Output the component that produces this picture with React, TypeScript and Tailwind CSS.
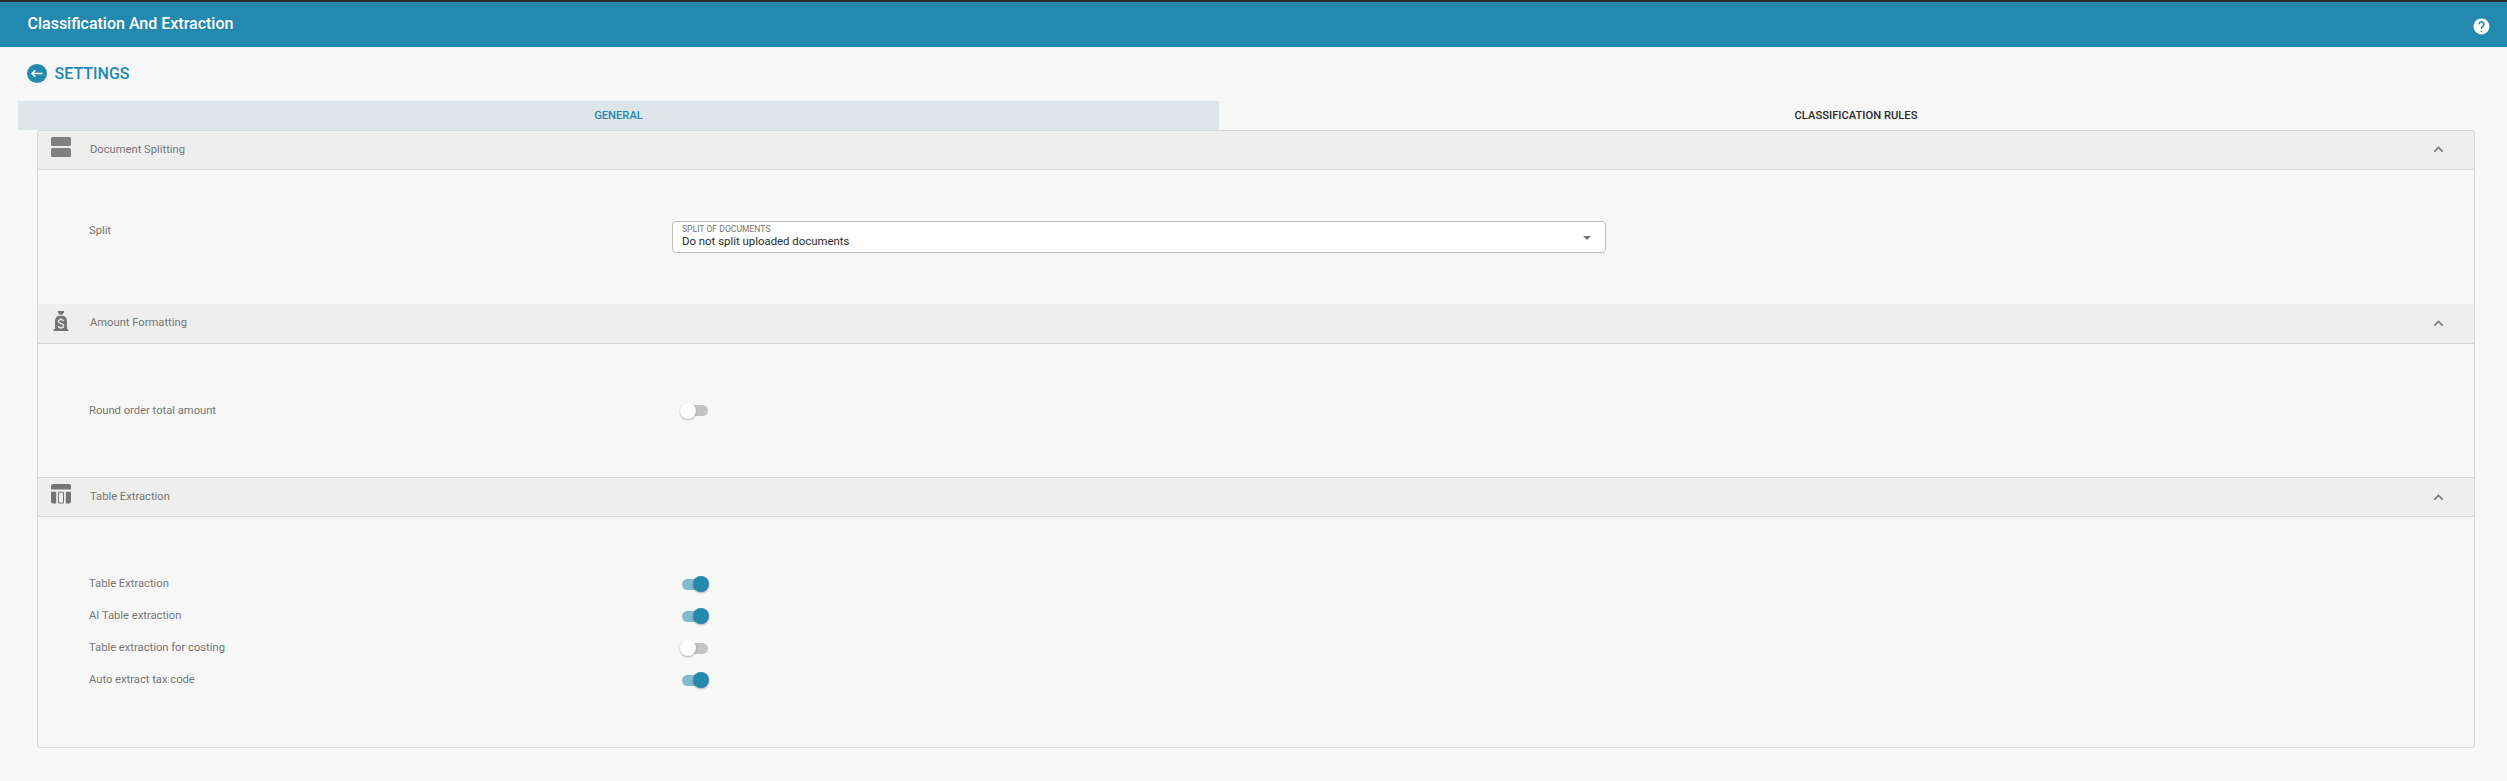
import React, { useState } from 'react';

const SplitIcon = () => (
  <svg width="20" height="20" viewBox="0 0 20 20" fill="#808080">
    <rect x="0" y="0" width="20" height="9" rx="1.5" />
    <rect x="0" y="11" width="20" height="9" rx="1.5" />
  </svg>
);

const MoneyBagIcon = () => (
  <svg width="20" height="20" viewBox="0 0 20 20" fill="#757575">
    <path d="M7 0h6v1.300L11.200 3.800H8.800L7 1.300z" />
    <path d="M7.600 4.800h4.800C14.600 5.600 16 7.400 16 10v8h1.300v2H2.700v-2H4v-8c0-2.600 1.400-4.400 3.600-5.200z" />
    <path
      d="M12.700 10.200c-.2-1-1.300-1.600-2.700-1.600s-2.600.7-2.600 2c0 2.800 5.300 1.300 5.300 4.100 0 1.300-1.300 2-2.700 2s-2.600-.7-2.800-1.900M10 7.200v1.400M10 16.700v1.300"
      fill="none"
      stroke="#eeeeee"
      strokeWidth="1.200"
    />
  </svg>
);

const TableIcon = () => (
  <svg width="20" height="20" viewBox="0 0 20 20" fill="#757575">
    <path d="M2 0h16a2 2 0 0 1 2 2v3.500H0V2a2 2 0 0 1 2-2z" />
    <path d="M0 7.700h5.200V19.500H2a2 2 0 0 1-2-2z" />
    <path d="M14.800 7.700H20v9.800a2 2 0 0 1-2 2h-3.200z" />
    <path d="M7.500 8.200h5v10.800h-5z" fill="none" stroke="#757575" strokeWidth="1" />
  </svg>
);

const ChevronUp = () => (
  <svg width="19" height="19" viewBox="0 0 24 24" fill="#757575">
    <path d="m12 8-6 6 1.410 1.410L12 10.830l4.590 4.580L18 14z" />
  </svg>
);

const HelpIcon = () => (
  <svg width="19" height="19" viewBox="0 0 24 24" fill="#ffffff">
    <path d="M12 2C6.480 2 2 6.480 2 12s4.480 10 10 10 10-4.480 10-10S17.520 2 12 2zm1 17h-2v-2h2v2zm2.070-7.750l-.9.920C13.450 12.900 13 13.500 13 15h-2v-.5c0-1.100.45-2.100 1.170-2.830l1.240-1.260c.37-.36.590-.86.590-1.410 0-1.100-.9-2-2-2s-2 .9-2 2H8c0-2.210 1.790-4 4-4s4 1.790 4 4c0 .88-.36 1.680-.93 2.250z" />
  </svg>
);

const BackIcon = () => (
  <svg width="20" height="19" viewBox="0 0 20 19">
    <ellipse cx="10" cy="9.500" rx="10" ry="9.500" fill="#2389af" />
    <path d="M15.500 9.500H5M8.300 6.200 5 9.500l3.300 3.300" fill="none" stroke="#fff" strokeWidth="1.500" />
  </svg>
);

function Switch({ initial, className = '' }: { initial: boolean; className?: string }) {
  const [on, setOn] = useState(initial);
  return (
    <button
      type="button"
      role="switch"
      aria-checked={on}
      onClick={() => setOn(!on)}
      className={`flex h-[11px] w-[26px] items-center rounded-full ${on ? 'bg-[#84b9cf]' : 'bg-[#c4c2c3]'} ${className}`}
    >
      <span
        className={`h-4 w-4 shrink-0 rounded-full shadow-[0_1px_2px_rgba(0,0,0,0.3)] ${
          on ? 'ml-[11px] bg-[#2389af]' : '-ml-[2px] bg-white'
        }`}
      />
    </button>
  );
}

type HeaderProps = { icon: React.ReactNode; title: string; className: string; titlePad: string; chevronPad: string };

function SectionHeader({ icon, title, className, titlePad, chevronPad }: HeaderProps) {
  return (
    <div className={`flex items-start border-b border-[#d6d6d6] bg-[#eeeeee] pl-[13px] pr-[26px] ${className}`}>
      <div className="pt-1.5">{icon}</div>
      <div className={`ml-[19px] flex-1 leading-4 ${titlePad}`}>{title}</div>
      <div className={chevronPad}>
        <ChevronUp />
      </div>
    </div>
  );
}

function SettingRow({ label, initial, switchClass }: { label: string; initial: boolean; switchClass?: string }) {
  return (
    <div className="flex h-8 items-center">
      <div className="w-[593px] leading-4">{label}</div>
      <Switch initial={initial} className={switchClass} />
    </div>
  );
}

export default function App() {
  return (
    <div className="flex h-[781px] w-full flex-col bg-[#f7f7f7] font-['Roboto',sans-serif] text-[11.2px] text-[#757575]">
      <header className="flex h-[47px] items-start justify-between border-t-2 border-[#2b2b2b] bg-[#2389af] pl-[27.5px] pr-[16px]">
        <h1 className="pt-[10px] text-base font-medium leading-6 text-white">Classification And Extraction</h1>
        <div className="pt-[15px]">
          <HelpIcon />
        </div>
      </header>

      <div className="flex h-[54px] items-center gap-[7.5px] pl-[27px] text-base font-medium text-[#2389af]">
        <div className="pb-px">
          <BackIcon />
        </div>
        <h2>SETTINGS</h2>
      </div>

      <nav className="flex h-[29px] pl-[18px] text-[11.2px] font-medium leading-[29px]">
        <div className="w-[1201px] bg-[#dde5e8] text-center text-[#2389af]">GENERAL</div>
        <div className="w-[1274px] text-center text-[#2b2b2b]">CLASSIFICATION RULES</div>
      </nav>

      <main className="ml-[37px] flex h-[618px] w-[2438px] flex-col overflow-hidden rounded-[3px] border border-[#d6d6d6]">
        <SectionHeader
          icon={<SplitIcon />}
          title="Document Splitting"
          className="h-[39px]"
          titlePad="pt-[11px]"
          chevronPad="pt-[9px]"
        />
        <div className="flex h-[134px] items-start pl-[51px]">
          <div className="w-[583px] pt-[53px] leading-4">Split</div>
          <div className="mt-[51px] flex h-8 w-[934px] items-start justify-between rounded-[4px] border border-[#bdbdbd] bg-white pl-[9px] pr-[14px]">
            <div className="pt-0.5">
              <div className="text-[8.600px] leading-[11px]">SPLIT OF DOCUMENTS</div>
              <div className="text-[11.400px] leading-[13px] text-[#2b2b2b]">Do not split uploaded documents</div>
            </div>
            <svg className="mt-[14px]" width="8" height="4" viewBox="0 0 8 4" fill="#757575">
              <path d="M0 0h8L4 4z" />
            </svg>
          </div>
        </div>

        <SectionHeader
          icon={<MoneyBagIcon />}
          title="Amount Formatting"
          className="h-10 pt-px"
          titlePad="pt-[10px]"
          chevronPad="pt-[9px]"
        />
        <div className="flex h-[133px] flex-col pl-[51px] pt-[51px]">
          <SettingRow label="Round order total amount" initial={false} switchClass="mb-px" />
        </div>

        <SectionHeader
          icon={<TableIcon />}
          title="Table Extraction"
          className="h-10 border-t"
          titlePad="pt-[11px]"
          chevronPad="pt-[10px]"
        />
        <div className="flex flex-col pl-[51px] pt-[51px]">
          <SettingRow label="Table Extraction" initial={true} />
          <SettingRow label="AI Table extraction" initial={true} />
          <SettingRow label="Table extraction for costing" initial={false} />
          <SettingRow label="Auto extract tax code" initial={true} />
        </div>
      </main>
    </div>
  );
}
